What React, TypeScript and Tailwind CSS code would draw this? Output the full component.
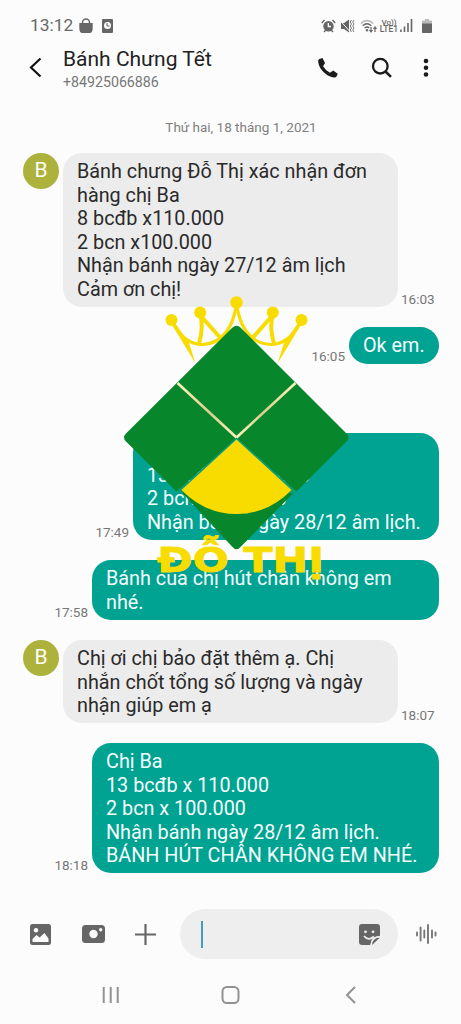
import type { ReactNode } from "react";

const roboto = "font-['Roboto','Noto_Sans',sans-serif]";

function StatusBar() {
  return (
    <div className="flex h-[42px] items-center pt-[9px] pl-[30px] pr-[29px] text-[#666]">
      <span className="w-[49px] text-[17.4px] leading-none">13:12</span>
      <svg className="mt-px" width="14" height="16" viewBox="0 0 14 16">
        <path d="M.3 5h13.4v4.5c0 4-1 5.5-3.400 5.500H3.700C1.300 15 .3 13.500.3 9.500z" fill="#666" />
        <path d="M3.500 6V4.500a3.500 3.500 0 0 1 7 0V6" fill="none" stroke="#666" strokeWidth="1.500" />
      </svg>
      <svg className="ml-[9px]" width="11" height="14" viewBox="0 0 11 14">
        <rect width="11" height="14" rx="1" fill="#666" />
        <circle cx="5.500" cy="6.500" r="3.500" fill="#fcfcfc" />
        <path d="M5 4v3h2.500" stroke="#666" fill="none" />
      </svg>
      <div className="ml-auto flex items-center">
        <svg width="15" height="14" viewBox="0 0 15 14">
          <circle cx="7.500" cy="7.300" r="5.200" fill="#666" />
          <path d="M.8 4 3.500 1M14.200 4 11.500 1M3 13l1.800-2M12 13l-1.800-2" stroke="#666" strokeWidth="1.400" />
          <path d="M7.300 4v3.500H10" stroke="#fcfcfc" strokeWidth="1.300" fill="none" />
        </svg>
        <svg className="ml-[4px]" width="15" height="14" viewBox="0 0 15 14">
          <path d="M1 4h3l5-3.500v13L4 10H1z" fill="#666" />
          <path d="M0 1.500 9.500 12" stroke="#fcfcfc" strokeWidth="1" />
          <path d="m11.500 1-1.300 2 1.300 2-1.300 2 1.300 2-1.300 2 1.300 2M14 1l-1.300 2L14 5l-1.300 2L14 9l-1.300 2L14 13" stroke="#777" fill="none" strokeWidth="1" />
        </svg>
        <svg className="ml-[5px]" width="18" height="14" viewBox="0 0 18 14">
          <g fill="none" strokeWidth="1.300">
            <path d="M.8 4.500q6.200-6 12.400 0" stroke="#b5b5b5" />
            <path d="M2.700 6.800q4.300-4 8.600 0M4.700 9q2.300-2 4.600 0" stroke="#666" />
          </g>
          <circle cx="7" cy="11.300" r="1.200" fill="#666" />
          <path d="M11 8v4.500M9.500 11l1.500 2 1.500-2M15 13V8.500M13.500 10 15 8l1.500 2" stroke="#666" fill="none" strokeWidth="1.200" />
        </svg>
        <div className="ml-[2px] flex w-[18px] flex-col items-center text-[8px] leading-[7px] font-medium">
          <span>Vo))</span>
          <span className="text-[8.500px]">LTE1</span>
        </div>
        <svg className="ml-[2px]" width="13" height="13" viewBox="0 0 13 13">
          <path d="M1 10.500V13M4.500 7.500V13M8 4v9M11.500 0v13" stroke="#666" strokeWidth="1.600" />
        </svg>
        <svg className="ml-[9px]" width="10" height="14" viewBox="0 0 10 14">
          <path d="M3 0h4v1.500h2.200q.8 0 .8.800V5H0V2.300q0-.8.800-.8H3z" fill="#bbb" />
          <path d="M0 4.500h10v8.700q0 .8-.8.800H.8q-.8 0-.8-.8z" fill="#666" />
        </svg>
      </div>
    </div>
  );
}

function Header() {
  return (
    <header className="flex h-[68px] pl-[29px]">
      <svg className="mt-[15px]" width="14" height="21" viewBox="0 0 14 21">
        <path d="M11.500 1.500 2 10.500l9.500 9" fill="none" stroke="#111" strokeWidth="2.200" />
      </svg>
      <div className="ml-[20px] w-[200px]">
        <h1 className="pt-[4px] text-[21px] leading-[26px] whitespace-nowrap text-[#222]">Bánh Chưng Tết</h1>
        <p className="mt-[2px] text-[14.200px] leading-[17px] text-[#777]">+84925066886</p>
      </div>
      <svg className="mt-[15px] ml-[54px]" width="22" height="22" viewBox="0 0 22 22">
        <path d="M5.500 1 2.300 2Q1 2.500 1.100 4.500 2 11 7 15.500q5 4.600 10 5 2 .1 2.700-1.200l1-2.500-4.500-3.300-3.200 2.200Q8.400 13.500 6.100 9.300L8 6z" fill="#1c1c1c" />
      </svg>
      <svg className="mt-[15px] ml-[32px]" width="22" height="22" viewBox="0 0 22 22">
        <circle cx="9.300" cy="9.200" r="7.300" fill="none" stroke="#1c1c1c" strokeWidth="2.300" />
        <path d="m14.500 14.500 5.500 5.300" stroke="#1c1c1c" strokeWidth="2.500" />
      </svg>
      <svg className="mt-[16px] ml-[30px]" width="6" height="20" viewBox="0 0 6 20">
        <g fill="#1c1c1c"><circle cx="3" cy="3" r="2.300" /><circle cx="3" cy="9.800" r="2.300" /><circle cx="3" cy="16.500" r="2.300" /></g>
      </svg>
    </header>
  );
}

type MessageProps = { lines: string[]; time: string; bubble: string };

function Lines({ lines }: { lines: string[] }) {
  return (
    <>
      {lines.map((line) => (
        <p key={line} className="whitespace-nowrap">{line}</p>
      ))}
    </>
  );
}

function Received({ lines, time, bubble }: MessageProps) {
  return (
    <div className="flex pl-[23px]">
      <div className="flex size-[36px] shrink-0 items-center justify-center rounded-full bg-[#acb23b] text-[21px] text-white">B</div>
      <div className={`ml-[4px] w-[335px] shrink-0 rounded-[19px] bg-[#ececec] px-[14px] pt-[7px] text-[19.800px] leading-[23.500px] text-[#2a2a2a] ${bubble}`}>
        <Lines lines={lines} />
      </div>
      <span className="ml-[3px] self-end text-[13.500px] leading-[16px] text-[#777]">{time}</span>
    </div>
  );
}

function Sent({ lines, time, bubble }: MessageProps) {
  return (
    <div className="flex justify-end pr-[22px]">
      <span className="mr-[4px] self-end text-[13.500px] leading-[16px] text-[#777]">{time}</span>
      <div className={`shrink-0 rounded-[19px] bg-[#00a292] px-[14px] pt-[7px] text-[19.800px] leading-[23.500px] text-[#f4fffd] ${bubble}`}>
        <Lines lines={lines} />
      </div>
    </div>
  );
}

function Crown() {
  return (
    <g fill="#f8dc00">
      <circle cx="236.500" cy="302.500" r="6.200" />
      {[false, true].map((flip) => (
        <g key={String(flip)} transform={flip ? "translate(473 0) scale(-1 1)" : undefined}>
          <circle cx="171.500" cy="320" r="6" />
          <circle cx="200.200" cy="312.500" r="6" />
          <path d="M171 323 195.500 363.500 189 343 175 323z" />
          <g fill="none" stroke="#f8dc00" strokeWidth="3.200">
            <path d="M173 323Q184 344 202 344.500 218 344 227 331 234 321 236.500 304" />
            <path d="M200 314Q204 326 199 344" strokeWidth="4" />
            <path d="M201 316 220 337.500" strokeWidth="4" />
          </g>
        </g>
      ))}
    </g>
  );
}

function Watermark() {
  return (
    <svg className="pointer-events-none absolute top-[290px] left-[120px]" width="235" height="300" viewBox="120 290 235 300">
      <defs>
        <linearGradient id="seamLeft" x1="0" y1="0" x2="1" y2="1">
          <stop offset="0" stopColor="#fbf3bd" /><stop offset=".55" stopColor="#d9cf8d" /><stop offset="1" stopColor="#fbf3bd" />
        </linearGradient>
        <linearGradient id="seamRight" x1="1" y1="0" x2="0" y2="1">
          <stop offset="0" stopColor="#fbf3bd" /><stop offset=".55" stopColor="#d9cf8d" /><stop offset="1" stopColor="#fbf3bd" />
        </linearGradient>
      </defs>
      <Crown />
      <g fill="#07862c">
        <path d="M232.500 327.500Q236.500 324 240.500 327.500L346.500 433.500Q350.500 437.500 346.500 441.500L296.500 491.500 236.500 438.500 176.500 491.500 126 441.500Q122 437.500 126 433.500z" />
        <path d="M181 491.500 232 546.500Q236.500 552 241 546.500L293.500 493 290 491.500Q236.500 535 183 491.500z" />
      </g>
      <path d="M236.500 437.500 177.500 491.500 182 494 236.500 444 291 494 296 491.500z" fill="#0a9d77" />
      <path d="M236.500 439.500 181.500 490Q205 514 236.500 514 268 514 291.500 490z" fill="#f8dc00" />
      <path d="M177.500 383 236.500 437.500" stroke="url(#seamLeft)" strokeWidth="2.600" />
      <path d="M295.500 383 236.500 437.500" stroke="url(#seamRight)" strokeWidth="2.600" />
      <text x="157" y="572" textLength="167" lengthAdjust="spacingAndGlyphs" fill="#f8dc00" stroke="#f8dc00" strokeWidth=".8" fontSize="34.500" fontWeight="700" fontFamily="DejaVu Sans, sans-serif">ĐỖ THỊ</text>
    </svg>
  );
}

function Composer() {
  return (
    <div className="flex h-[50px] items-center pl-[30px]">
      <svg width="21" height="21" viewBox="0 0 21 21">
        <rect width="21" height="21" rx="2.500" fill="#666" />
        <circle cx="6" cy="6.300" r="2.200" fill="#fcfcfc" />
        <path d="M2.500 18v-3l4-4 3 2.500L14.500 9l4 5.500V18z" fill="#fcfcfc" />
      </svg>
      <svg className="ml-[31px]" width="23" height="18" viewBox="0 0 23 18">
        <rect width="23" height="18" rx="3.500" fill="#666" />
        <circle cx="11.500" cy="9" r="4.200" fill="#fcfcfc" /><circle cx="18.700" cy="4.700" r="1.700" fill="#fcfcfc" />
      </svg>
      <svg className="ml-[30px]" width="21" height="21" viewBox="0 0 21 21">
        <path d="M10.500 0v21M0 10.500h21" stroke="#666" strokeWidth="2.200" />
      </svg>
      <div className="ml-[24px] flex h-[50px] w-[218px] items-center rounded-full bg-[#eee] pl-[21px]">
        <div className="h-[27px] w-[2px] bg-[#3e9fc5]" />
        <svg className="ml-[156px]" width="21" height="21" viewBox="0 0 21 21">
          <path d="M3 0h15q3 0 3 3v9q-9 0-9.500 9H3q-3 0-3-3V3q0-3 3-3zM13 21q0-7.500 8-7.500z" fill="#666" />
          <circle cx="6.500" cy="7.800" r="1.400" fill="#eee" /><circle cx="14" cy="7.800" r="1.400" fill="#eee" />
          <path d="M5 12q4.500 5.500 10 .5" fill="none" stroke="#eee" strokeWidth="1.800" />
          <path d="M12 21q.5-7.500 9-8.500" fill="none" stroke="#eee" strokeWidth="1.300" />
        </svg>
      </div>
      <svg className="ml-[17px]" width="22" height="20" viewBox="0 0 22 20">
        <path d="M2 8.500v3M5.600 3.500v13M9.300 6.500v7M13 1v18M17 6.500v7M20.500 8.500v3" stroke="#777" strokeWidth="1.900" strokeLinecap="round" />
      </svg>
    </div>
  );
}

function NavigationBar() {
  return (
    <nav className="mt-[27px] flex h-[18px]">
      <svg className="ml-[102px]" width="17" height="18" viewBox="0 0 17 18">
        <path d="M1.700 1v16M8.700 1v16M15.700 1v16" stroke="#929292" strokeWidth="2" />
      </svg>
      <svg className="ml-[102px]" width="19" height="18" viewBox="0 0 19 18">
        <rect x="1.500" y="1" width="16" height="16" rx="4.500" fill="none" stroke="#929292" strokeWidth="2" />
      </svg>
      <svg className="ml-[105px]" width="11" height="18" viewBox="0 0 11 18">
        <path d="M10 1 2 9l8 8" fill="none" stroke="#929292" strokeWidth="2" />
      </svg>
    </nav>
  );
}

function Screen({ children }: { children: ReactNode }) {
  return <main className={`relative h-[1024px] w-[461px] overflow-hidden bg-[#fcfcfc] ${roboto}`}>{children}</main>;
}

export default function App() {
  return (
    <Screen>
      <StatusBar />
      <Header />
      <p className="pt-[8px] pr-px pl-[22px] text-center text-[13.500px] leading-[18px] text-[#808080]">Thứ hai, 18 tháng 1, 2021</p>
      <section className="mt-[17px] flex h-[756px] flex-col gap-[20px]">
        <Received bubble="h-[154px]" time="16:03" lines={["Bánh chưng Đỗ Thị xác nhận đơn", "hàng chị Ba", "8 bcđb x110.000", "2 bcn x100.000", "Nhận bánh ngày 27/12 âm lịch", "Cảm ơn chị!"]} />
        <Sent bubble="h-[36.500px] w-[90px]" time="16:05" lines={["Ok em."]} />
        <div className="mt-[49.500px]">
          <Sent bubble="h-[107px] w-[306px]" time="17:49" lines={["Chị Ba", "13 bcđb x 110.000", "2 bcn x 100.000", "Nhận bánh ngày 28/12 âm lịch."]} />
        </div>
        <Sent bubble="h-[60px] w-[347px]" time="17:58" lines={["Bánh của chị hút chân không em", "nhé."]} />
        <Received bubble="h-[83px]" time="18:07" lines={["Chị ơi chị bảo đặt thêm ạ. Chị", "nhắn chốt tổng số lượng và ngày", "nhận giúp em ạ"]} />
        <Sent bubble="h-[130px] w-[347px]" time="18:18" lines={["Chị Ba", "13 bcđb x 110.000", "2 bcn x 100.000", "Nhận bánh ngày 28/12 âm lịch.", "BÁNH HÚT CHÂN KHÔNG EM NHÉ."]} />
      </section>
      <Composer />
      <NavigationBar />
      <Watermark />
    </Screen>
  );
}
